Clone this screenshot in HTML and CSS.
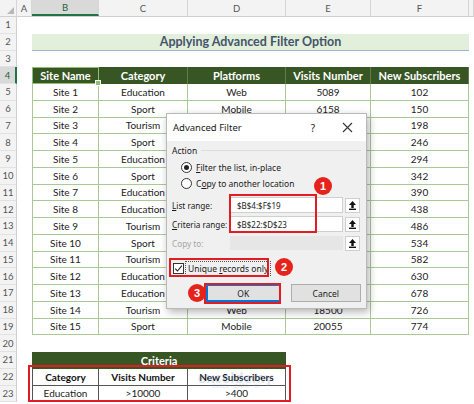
FILE: index.html
```html
<!DOCTYPE html>
<html lang="en">
  <head>
    <meta charset="UTF-8" />
    <title>Applying Advanced Filter Option</title>
    <link rel="stylesheet" href="styles.css">
  </head>
  <body>
    <div class="sheet">
      <div class="row heads">
        <div class="corner"></div>
        <div class="ch">A</div>
        <div class="ch sel">B</div>
        <div class="ch">C</div>
        <div class="ch">D</div>
        <div class="ch">E</div>
        <div class="ch">F</div>
        <div class="ch"></div>
      </div>

      <div class="row"><div class="rh">1</div></div>
      <div class="row"><div class="rh">2</div><div class="title">Applying Advanced Filter Option</div></div>
      <div class="row"><div class="rh">3</div></div>

      <div class="row thead">
        <div class="rh sel">4</div>
        <div class="c b active">Site Name</div>
        <div class="c">Category</div>
        <div class="c">Platforms</div>
        <div class="c">Visits Number</div>
        <div class="c">New Subscribers</div>
      </div>

      <div class="row data"><div class="rh">5</div><div class="c b">Site 1</div><div class="c">Education</div><div class="c">Web</div><div class="c">5089</div><div class="c">102</div></div>
      <div class="row data"><div class="rh">6</div><div class="c b">Site 2</div><div class="c">Sport</div><div class="c">Mobile</div><div class="c">6158</div><div class="c">150</div></div>
      <div class="row data"><div class="rh">7</div><div class="c b">Site 3</div><div class="c">Tourism</div><div class="c">Web</div><div class="c">7227</div><div class="c">198</div></div>
      <div class="row data"><div class="rh">8</div><div class="c b">Site 4</div><div class="c">Sport</div><div class="c">Mobile</div><div class="c">8296</div><div class="c">246</div></div>
      <div class="row data"><div class="rh">9</div><div class="c b">Site 5</div><div class="c">Education</div><div class="c">Web</div><div class="c">9365</div><div class="c">294</div></div>
      <div class="row data"><div class="rh">10</div><div class="c b">Site 6</div><div class="c">Sport</div><div class="c">Mobile</div><div class="c">10434</div><div class="c">342</div></div>
      <div class="row data"><div class="rh">11</div><div class="c b">Site 7</div><div class="c">Education</div><div class="c">Web</div><div class="c">11503</div><div class="c">390</div></div>
      <div class="row data"><div class="rh">12</div><div class="c b">Site 8</div><div class="c">Education</div><div class="c">Mobile</div><div class="c">12572</div><div class="c">438</div></div>
      <div class="row data"><div class="rh">13</div><div class="c b">Site 9</div><div class="c">Tourism</div><div class="c">Web</div><div class="c">13641</div><div class="c">486</div></div>
      <div class="row data"><div class="rh">14</div><div class="c b">Site 10</div><div class="c">Sport</div><div class="c">Mobile</div><div class="c">14710</div><div class="c">534</div></div>
      <div class="row data"><div class="rh">15</div><div class="c b">Site 11</div><div class="c">Tourism</div><div class="c">Web</div><div class="c">15779</div><div class="c">582</div></div>
      <div class="row data"><div class="rh">16</div><div class="c b">Site 12</div><div class="c">Education</div><div class="c">Mobile</div><div class="c">16848</div><div class="c">630</div></div>
      <div class="row data"><div class="rh">17</div><div class="c b">Site 13</div><div class="c">Education</div><div class="c">Web</div><div class="c">17917</div><div class="c">678</div></div>
      <div class="row data"><div class="rh">18</div><div class="c b">Site 14</div><div class="c">Tourism</div><div class="c">Web</div><div class="c">18500</div><div class="c">726</div></div>
      <div class="row data"><div class="rh">19</div><div class="c b">Site 15</div><div class="c">Sport</div><div class="c">Mobile</div><div class="c">20055</div><div class="c">774</div></div>

      <div class="row"><div class="rh">20</div></div>
      <div class="row"><div class="rh">21</div><div class="crit-title">Criteria</div></div>
      <div class="row crit crit-head"><div class="rh">22</div><div class="c b">Category</div><div class="c">Visits Number</div><div class="c">New Subscribers</div></div>
      <div class="row crit"><div class="rh">23</div><div class="c b">Education</div><div class="c">&gt;10000</div><div class="c">&gt;400</div></div>

      <div class="watermark">exceldemy<span>EXCEL · DATA · BI</span></div>

      <div class="dlg">
        <div class="dlg-title">
          <span class="dlg-name">Advanced Filter</span>
          <span class="dlg-help">?</span>
          <span class="dlg-close">
            <svg width="11" height="11" viewBox="0 0 11 11"><path d="M1 1 L10 10 M10 1 L1 10" stroke="#333" stroke-width="1.1" fill="none"/></svg>
          </span>
        </div>
        <div class="dlg-body">
          <div class="group">Action</div>
          <label class="opt"><span class="radio on"></span><span><u>F</u>ilter the list, in-place</span></label>
          <label class="opt"><span class="radio"></span><span>C<u>o</u>py to another location</span></label>

          <div class="field first">
            <span class="lbl"><u>L</u>ist range:</span>
            <span class="inp">$B$4:$F$19</span>
            <span class="pick"><svg width="9" height="10" viewBox="0 0 9 10"><path d="M4.5 1 L8 5 H5.7 V8 H3.3 V5 H1 Z" fill="#111"/><rect x="1" y="8.6" width="7" height="1.4" fill="#111"/></svg></span>
          </div>
          <div class="field">
            <span class="lbl"><u>C</u>riteria range:</span>
            <span class="inp">$B$22:$D$23</span>
            <span class="pick"><svg width="9" height="10" viewBox="0 0 9 10"><path d="M4.5 1 L8 5 H5.7 V8 H3.3 V5 H1 Z" fill="#111"/><rect x="1" y="8.6" width="7" height="1.4" fill="#111"/></svg></span>
          </div>
          <div class="field off">
            <span class="lbl">Copy to:</span>
            <span class="inp"></span>
            <span class="pick"><svg width="9" height="10" viewBox="0 0 9 10"><path d="M4.5 1 L8 5 H5.7 V8 H3.3 V5 H1 Z" fill="#111"/><rect x="1" y="8.6" width="7" height="1.4" fill="#111"/></svg></span>
          </div>

          <label class="check"><span class="box"><svg width="9" height="9" viewBox="0 0 9 9"><path d="M1.2 4.6 L3.5 7 L7.9 1.6" stroke="#222" stroke-width="1.1" fill="none"/></svg></span><span class="focus">Unique <u>r</u>ecords only</span></label>

          <div class="btns">
            <span class="btn ok">OK</span>
            <span class="btn">Cancel</span>
          </div>
        </div>
      </div>

      <div class="mark m1"></div>
      <div class="mark m2"></div>
      <div class="mark m3"></div>
      <div class="mark m4"></div>
      <div class="badge b1">1</div>
      <div class="badge b2">2</div>
      <div class="badge b3">3</div>
    </div>
  </body>
</html>
```

FILE: styles.css
```css
body {
  margin: 0;
  background: #fff;
  font-family: Lato, "Liberation Sans", sans-serif;
}
.sheet {
  position: relative;
  width: 474px;
  height: 404px;
  overflow: hidden;
}
.row {
  display: grid;
  grid-template-columns: 17px 15px 67px 89px 98px 85px 98px 5px;
  height: 16.75px;
  font-size: 10px;
  color: #222;
}
.heads {
  height: 17px;
  background: #f3f3f3;
  border-bottom: 1px solid #d0d0d0;
  box-sizing: border-box;
}
.corner {
  position: relative;
  border-right: 1px solid #d6d6d6;
}
.corner::after {
  content: "";
  position: absolute;
  right: 2px;
  bottom: 2px;
  border-left: 7px solid transparent;
  border-bottom: 7px solid #b8b8b8;
}
.ch {
  display: flex;
  align-items: center;
  justify-content: center;
  border-right: 1px solid #d6d6d6;
  font-size: 9.5px;
  color: #555;
}
.ch.sel {
  background: #d9d9d9;
  border-bottom: 2px solid #217346;
  color: #1f5f38;
}
.rh {
  grid-column: 1;
  display: flex;
  align-items: center;
  justify-content: center;
  background: #f3f3f3;
  border-right: 1px solid #d0d0d0;
  border-bottom: 1px solid #e2e2e2;
  box-sizing: border-box;
  font-size: 9.5px;
  color: #555;
}
.rh.sel {
  background: #d9d9d9;
  border-right: 2px solid #217346;
  color: #1f5f38;
}
.c {
  display: flex;
  align-items: center;
  justify-content: center;
  box-sizing: border-box;
  white-space: nowrap;
}
.b {
  grid-column: 3;
}

/* title band */
.title {
  grid-column: 3 / 8;
  background: #e2efda;
  border-bottom: 1px solid #9db4cc;
  display: flex;
  align-items: center;
  justify-content: center;
  font-weight: bold;
  font-size: 12.5px;
  color: #44546a;
}

/* main table */
.thead .c {
  background: #375623;
  color: #fff;
  font-weight: bold;
  font-size: 11px;
  border-right: 1px solid #5f7f4a;
}
.thead .c.active {
  position: relative;
  border: 1px solid #8fbf74;
}
.thead .c.active::after {
  content: "";
  position: absolute;
  right: -3px;
  bottom: -3px;
  width: 4px;
  height: 4px;
  background: #8fbf74;
  border: 1px solid #fff;
}
.data .c {
  border-right: 1px solid #a9c996;
  border-bottom: 1px solid #a9c996;
}
.data .c.b {
  border-left: 1px solid #a9c996;
}

/* criteria table */
.crit-title {
  grid-column: 3 / 6;
  background: #375623;
  color: #fff;
  font-weight: bold;
  font-size: 11px;
  display: flex;
  align-items: center;
  justify-content: center;
}
.crit .c {
  border-right: 1px solid #555;
  border-bottom: 1px solid #555;
}
.crit .c.b {
  border-left: 1px solid #555;
}
.crit-head .c {
  font-weight: bold;
  color: #111;
}
.watermark {
  position: absolute;
  left: 198px;
  top: 368px;
  font-size: 15px;
  font-weight: bold;
  color: #8aa8d4;
  opacity: 0.3;
  letter-spacing: 0.5px;
  pointer-events: none;
}
.watermark span {
  display: block;
  font-size: 5px;
  font-weight: normal;
  margin-top: -3px;
  text-align: center;
}

/* dialog */
.dlg {
  position: absolute;
  left: 166px;
  top: 113px;
  width: 201px;
  height: 196px;
  background: #f0f0f0;
  border: 1px solid #b9b9b9;
  box-sizing: border-box;
  box-shadow: 2px 3px 8px rgba(0, 0, 0, 0.3);
  font-family: "Noto Sans", "Open Sans", sans-serif;
  font-size: 8.5px;
  color: #1a1a1a;
}
.dlg-title {
  height: 27px;
  background: #fff;
  display: flex;
  align-items: center;
  padding: 0 6px;
}
.dlg-name {
  font-size: 9.5px;
  flex: 1;
}
.dlg-help {
  font-size: 10px;
  margin-right: 27px;
}
.dlg-close {
  display: flex;
  margin-right: 7px;
}
.dlg-body {
  padding: 3px 5px 0 5px;
}
.group {
  display: flex;
  align-items: center;
  height: 12px;
  margin-bottom: 3px;
}
.group::after {
  content: "";
  flex: 1;
  border-top: 1px solid #dcdcdc;
  margin-left: 4px;
}
.opt {
  display: flex;
  align-items: center;
  height: 16px;
  padding-left: 9px;
}
.radio {
  width: 9px;
  height: 9px;
  border: 1px solid #333;
  border-radius: 50%;
  background: #fff;
  margin-right: 4px;
  position: relative;
}
.radio.on::after {
  content: "";
  position: absolute;
  left: 2px;
  top: 2px;
  width: 5px;
  height: 5px;
  border-radius: 50%;
  background: #222;
}
.field {
  display: flex;
  align-items: center;
  height: 18px;
  margin-top: 1px;
}
.field.first {
  margin-top: 5px;
}
.lbl {
  width: 58px;
  white-space: nowrap;
  font-size: 8.2px;
}
.inp {
  width: 113px;
  height: 16px;
  box-sizing: border-box;
  background: #fff;
  border: 1px solid #cfcfcf;
  display: flex;
  align-items: center;
  padding-left: 6px;
  font-size: 8px;
}
.pick {
  width: 15px;
  height: 15px;
  margin-left: 2px;
  box-sizing: border-box;
  background: #fff;
  border: 1px solid #cfcfcf;
  display: flex;
  align-items: center;
  justify-content: center;
}
.field.off .lbl {
  color: #a5a5a5;
}
.field.off .inp {
  background: #e6e6e6;
  border-color: #e6e6e6;
  height: 14px;
}
.check {
  display: flex;
  align-items: center;
  height: 18px;
  margin-top: 7px;
  padding-left: 1px;
}
.box {
  width: 9px;
  height: 9px;
  border: 1px solid #333;
  background: #fff;
  display: flex;
  margin-right: 1px;
}
.focus {
  border: 1px dotted #555;
  padding: 1px 2px;
}
.btns {
  display: flex;
  margin-top: 7px;
  padding-left: 34px;
  gap: 10px;
}
.btn {
  height: 18px;
  box-sizing: border-box;
  background: #e1e1e1;
  border: 1px solid #adadad;
  display: flex;
  align-items: center;
  justify-content: center;
  width: 71px;
}
.btn.ok {
  width: 75px;
  border: 2px solid #0078d7;
}

/* callouts over the screenshot */
.mark {
  position: absolute;
  border: 2px solid #e31b23;
  box-sizing: border-box;
}
.m1 { left: 229px; top: 194px; width: 88px; height: 39px; }
.m2 { left: 169px; top: 258px; width: 100px; height: 19px; }
.m3 { left: 204px; top: 283px; width: 77px; height: 21px; }
.m4 { left: 28px; top: 365px; width: 263px; height: 37px; }
.badge {
  position: absolute;
  width: 18px;
  height: 18px;
  border-radius: 50%;
  background: #e5231b;
  color: #fff;
  font-family: "Liberation Sans", sans-serif;
  font-weight: bold;
  font-size: 11px;
  display: flex;
  align-items: center;
  justify-content: center;
}
.b1 { left: 314px; top: 177px; }
.b2 { left: 275px; top: 258px; }
.b3 { left: 188px; top: 284px; }
```
